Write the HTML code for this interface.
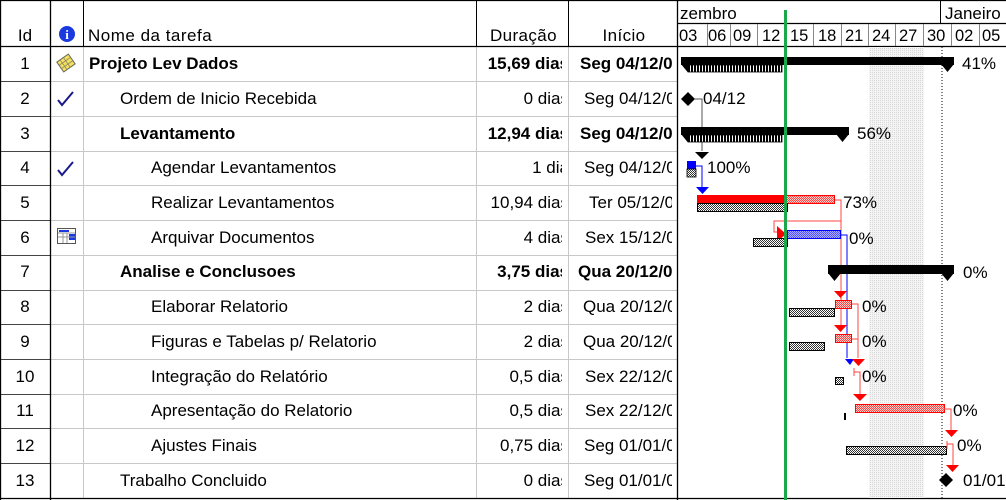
<!DOCTYPE html>
<html><head><meta charset="utf-8"><style>
html,body{margin:0;padding:0;background:#fff;}
svg{display:block;font-family:"Liberation Sans",Arial,sans-serif;}
</style></head><body>
<svg width="1006" height="500" viewBox="0 0 1006 500" xmlns="http://www.w3.org/2000/svg">
<defs>
<pattern id="gh" width="2" height="2" patternUnits="userSpaceOnUse"><rect width="2" height="2" fill="#fff"/><rect width="1" height="1" fill="#333"/><rect x="1" y="1" width="1" height="1" fill="#333"/></pattern>
<pattern id="rh" width="2" height="2" patternUnits="userSpaceOnUse"><rect width="2" height="2" fill="#fcc"/><rect width="1" height="1" fill="#f44"/><rect x="1" y="1" width="1" height="1" fill="#f44"/></pattern>
<pattern id="bh" width="2" height="2" patternUnits="userSpaceOnUse"><rect width="2" height="2" fill="#aaf"/><rect width="1" height="1" fill="#55f"/><rect x="1" y="1" width="1" height="1" fill="#55f"/></pattern>
<pattern id="wk" width="2" height="2" patternUnits="userSpaceOnUse"><rect width="2" height="2" fill="#f4f4f4"/><rect width="1" height="1" fill="#d8d8d8"/></pattern>
<pattern id="vs" width="3" height="2" patternUnits="userSpaceOnUse"><rect width="3" height="2" fill="#000"/><rect width="1" height="2" fill="#fff"/></pattern>
</defs>
<g stroke="#c8c8c8" stroke-width="1">
<line x1="50" y1="81.5" x2="677" y2="81.5"/><line x1="50" y1="116.5" x2="677" y2="116.5"/><line x1="50" y1="151.5" x2="677" y2="151.5"/><line x1="50" y1="185.5" x2="677" y2="185.5"/><line x1="50" y1="220.5" x2="677" y2="220.5"/><line x1="50" y1="255.5" x2="677" y2="255.5"/><line x1="50" y1="290.5" x2="677" y2="290.5"/><line x1="50" y1="324.5" x2="677" y2="324.5"/><line x1="50" y1="359.5" x2="677" y2="359.5"/><line x1="50" y1="394.5" x2="677" y2="394.5"/><line x1="50" y1="428.5" x2="677" y2="428.5"/><line x1="50" y1="463.5" x2="677" y2="463.5"/>
<line x1="83.5" y1="47" x2="83.5" y2="498"/><line x1="476.5" y1="47" x2="476.5" y2="498"/><line x1="568.5" y1="47" x2="568.5" y2="498"/>
</g>
<g stroke="#444" stroke-width="1">
<line x1="0" y1="81.5" x2="50" y2="81.5"/><line x1="0" y1="116.5" x2="50" y2="116.5"/><line x1="0" y1="151.5" x2="50" y2="151.5"/><line x1="0" y1="185.5" x2="50" y2="185.5"/><line x1="0" y1="220.5" x2="50" y2="220.5"/><line x1="0" y1="255.5" x2="50" y2="255.5"/><line x1="0" y1="290.5" x2="50" y2="290.5"/><line x1="0" y1="324.5" x2="50" y2="324.5"/><line x1="0" y1="359.5" x2="50" y2="359.5"/><line x1="0" y1="394.5" x2="50" y2="394.5"/><line x1="0" y1="428.5" x2="50" y2="428.5"/><line x1="0" y1="463.5" x2="50" y2="463.5"/>
</g>
<g stroke="#000" stroke-width="1.3">
<line x1="0" y1="46.5" x2="1006" y2="46.5"/>
<line x1="0" y1="498.5" x2="1006" y2="498.5"/>
<line x1="0.5" y1="0" x2="0.5" y2="500"/>
<line x1="50.5" y1="0" x2="50.5" y2="500"/>
<line x1="677.5" y1="0" x2="677.5" y2="500"/>
<line x1="0" y1="0.5" x2="1006" y2="0.5"/>
<line x1="677" y1="23.5" x2="1006" y2="23.5"/>
</g>
<g stroke="#000" stroke-width="1"><line x1="83.5" y1="0" x2="83.5" y2="47"/><line x1="476.5" y1="0" x2="476.5" y2="47"/><line x1="568.5" y1="0" x2="568.5" y2="47"/><line x1="940.5" y1="0" x2="940.5" y2="23"/></g>
<g stroke="#888" stroke-width="1">
<line x1="707.5" y1="24" x2="707.5" y2="46"/><line x1="730.5" y1="24" x2="730.5" y2="46"/><line x1="757.5" y1="24" x2="757.5" y2="46"/><line x1="785.5" y1="24" x2="785.5" y2="46"/><line x1="813.5" y1="24" x2="813.5" y2="46"/><line x1="841.5" y1="24" x2="841.5" y2="46"/><line x1="868.5" y1="24" x2="868.5" y2="46"/><line x1="895.5" y1="24" x2="895.5" y2="46"/><line x1="923.5" y1="24" x2="923.5" y2="46"/><line x1="951.5" y1="24" x2="951.5" y2="46"/><line x1="979.5" y1="24" x2="979.5" y2="46"/>
</g>
<g font-size="17" fill="#000">
<text x="25" y="41" text-anchor="middle">Id</text>
<circle cx="67" cy="34" r="8" fill="#1a3ae0"/><text x="67" y="39" text-anchor="middle" fill="#fff" font-size="13" font-weight="bold" font-family="Liberation Serif">i</text>
<text x="88" y="41" letter-spacing="0.5">Nome da tarefa</text>
<text x="557" y="41" text-anchor="end" letter-spacing="0.4">Duração</text>
<text x="624" y="41" text-anchor="middle" letter-spacing="0.4">Início</text>
<text x="680" y="19">zembro</text><text x="945" y="19">Janeiro</text>
<g font-size="16.5"><text x="679" y="41">03</text><text x="708" y="41">06</text><text x="733" y="41">09</text><text x="762" y="41">12</text><text x="790" y="41">15</text><text x="818" y="41">18</text><text x="845" y="41">21</text><text x="872" y="41">24</text><text x="899" y="41">27</text><text x="927" y="41">30</text><text x="955" y="41">02</text><text x="982" y="41">05</text></g>
</g>
<g font-size="17" fill="#000">
<g text-anchor="middle"><text x="25" y="69">1</text><text x="25" y="104">2</text><text x="25" y="139">3</text><text x="25" y="173">4</text><text x="25" y="208">5</text><text x="25" y="243">6</text><text x="25" y="277">7</text><text x="25" y="312">8</text><text x="25" y="347">9</text><text x="25" y="382">10</text><text x="25" y="416">11</text><text x="25" y="451">12</text><text x="25" y="486">13</text></g>
<text x="89" y="69" font-weight="bold">Projeto Lev Dados</text>
<text x="120" y="104">Ordem de Inicio Recebida</text>
<text x="120" y="139" font-weight="bold">Levantamento</text>
<text x="151" y="173">Agendar Levantamentos</text>
<text x="151" y="208">Realizar Levantamentos</text>
<text x="151" y="243">Arquivar Documentos</text>
<text x="120" y="277" font-weight="bold">Analise e Conclusoes</text>
<text x="151" y="312">Elaborar Relatorio</text>
<text x="151" y="347">Figuras e Tabelas p/ Relatorio</text>
<text x="151" y="382">Integração do Relatório</text>
<text x="151" y="416">Apresentação do Relatorio</text>
<text x="151" y="451">Ajustes Finais</text>
<text x="120" y="486">Trabalho Concluido</text>
</g>
<svg x="477" y="47" width="85" height="451" font-size="17">
<g transform="translate(-477,-47)" text-anchor="end">
<text x="569" y="69" font-weight="bold">15,69 dias</text><text x="569" y="104">0 dias</text><text x="569" y="139" font-weight="bold">12,94 dias</text><text x="569" y="173">1 dia</text><text x="569" y="208">10,94 dias</text><text x="569" y="243">4 dias</text><text x="569" y="277" font-weight="bold">3,75 dias</text><text x="569" y="312">2 dias</text><text x="569" y="347">2 dias</text><text x="569" y="382">0,5 dias</text><text x="569" y="416">0,5 dias</text><text x="569" y="451">0,75 dias</text><text x="569" y="486">0 dias</text>
</g></svg>
<svg x="569" y="47" width="103" height="451" font-size="17">
<g transform="translate(-569,-47)">
<text x="580" y="69" font-weight="bold">Seg 04/12/06</text><text x="584" y="104">Seg 04/12/06</text><text x="580" y="139" font-weight="bold">Seg 04/12/06</text><text x="584" y="173">Seg 04/12/06</text><text x="589" y="208">Ter 05/12/06</text><text x="585" y="243">Sex 15/12/06</text><text x="578" y="277" font-weight="bold">Qua 20/12/06</text><text x="583" y="312">Qua 20/12/06</text><text x="583" y="347">Qua 20/12/06</text><text x="585" y="382">Sex 22/12/06</text><text x="585" y="416">Sex 22/12/06</text><text x="584" y="451">Seg 01/01/07</text><text x="584" y="486">Seg 01/01/07</text>
</g></svg>
<g transform="translate(66,63) rotate(-35)"><rect x="-7" y="-6" width="14" height="12" fill="#f4e060" stroke="#665" stroke-width="1"/><path d="M-7,-2H7M-7,2H7M-3,-6V6M1,-6V6" stroke="#886" stroke-width="0.8"/></g>
<path d="M58,100 L62,105 L73,92" stroke="#1a1a8a" stroke-width="2" fill="none"/>
<path d="M58,170 L62,175 L73,162" stroke="#1a1a8a" stroke-width="2" fill="none"/>
<rect x="57.5" y="228.5" width="18" height="15" fill="#fff" stroke="#555"/><rect x="59" y="230" width="10" height="2" fill="#1a3ae0"/><rect x="69" y="234" width="6" height="6" fill="#1a3ae0"/><path d="M58,233H75M58,237H75M63,233V243M67,233V243" stroke="#999" stroke-width="1"/>
<rect x="869" y="47" width="55" height="451" fill="url(#wk)"/>
<line x1="942" y1="47" x2="942" y2="498" stroke="#000" stroke-dasharray="1,2"/>
<rect x="681" y="57" width="273" height="8" fill="#000"/>
<path d="M681,64h13l-6.5,8z M941,64h13l-6.5,8z" fill="#000"/>
<rect x="688" y="65" width="94" height="7" fill="url(#vs)" stroke="#000" stroke-width="0.8"/>
<text x="962" y="69" font-size="17">41%</text>
<path d="M688,92 l7,7 -7,7 -7,-7z" fill="#000"/>
<path d="M695,99 H702 V151" stroke="#555" fill="none"/>
<text x="703" y="104" font-size="17">04/12</text>
<rect x="681" y="127" width="168" height="8" fill="#000"/>
<path d="M681,134h13l-6.5,8z M836,134h13l-6.5,8z" fill="#000"/>
<rect x="688" y="135" width="94" height="7" fill="url(#vs)" stroke="#000" stroke-width="0.8"/>
<text x="857" y="139" font-size="17">56%</text>
<path d="M695,152h14l-7,7z" fill="#000"/>
<rect x="687" y="161" width="9" height="8" fill="#00f"/>
<rect x="687" y="169" width="9" height="8" fill="url(#gh)" stroke="#000" stroke-width="0.8"/>
<path d="M696,166 H702 V188" stroke="#00f" fill="none"/>
<path d="M696,187h13l-6.5,7z" fill="#00f"/>
<text x="707" y="173" font-size="17">100%</text>
<rect x="697" y="195" width="88" height="8" fill="#f00"/>
<rect x="785.5" y="195.5" width="49" height="8" fill="url(#rh)" stroke="#f00"/>
<rect x="697.5" y="203.5" width="90" height="8" fill="url(#gh)" stroke="#000"/>
<path d="M835,200 H841 V325" stroke="#f44" fill="none"/>
<text x="843" y="208" font-size="17">73%</text>
<path d="M841,221 H774 V232 H780" stroke="#f44" fill="none"/>
<path d="M777,226 L786,234 L777,242z" fill="#f00"/>
<rect x="787.5" y="230.5" width="53" height="8" fill="url(#bh)" stroke="#00f"/>
<rect x="753.5" y="238.5" width="34" height="8" fill="url(#gh)" stroke="#000"/>
<path d="M841,235 H847 V358" stroke="#00f" fill="none"/>
<text x="849" y="244" font-size="17">0%</text>
<rect x="828" y="265" width="126" height="9" fill="#000"/>
<path d="M828,273h13l-6.5,8z M941,273h13l-6.5,8z" fill="#000"/>
<text x="963" y="278" font-size="17">0%</text>
<path d="M834,291h13l-6.5,7z" fill="#f00"/>
<rect x="835.5" y="300.5" width="16" height="8" fill="url(#rh)" stroke="#f00"/>
<rect x="789.5" y="308.5" width="45" height="8" fill="url(#gh)" stroke="#000"/>
<path d="M852,304 H858 V358" stroke="#f44" fill="none"/>
<text x="862" y="312" font-size="17">0%</text>
<path d="M834,325h13l-6.5,7z" fill="#f00"/>
<rect x="835.5" y="334.5" width="16" height="8" fill="url(#rh)" stroke="#f00"/>
<rect x="789.5" y="342.5" width="35" height="8" fill="url(#gh)" stroke="#000"/>
<path d="M852,339 H858" stroke="#f44" fill="none"/>
<text x="862" y="347" font-size="17">0%</text>
<path d="M845,359h9l-4,6z" fill="#00f"/>
<path d="M852,359h13l-6.5,7z" fill="#f00"/>
<path d="M854,368 V376 M854,372 H860 V394" stroke="#f44" fill="none"/>
<path d="M853,394h14l-7,7z" fill="#f00"/>
<rect x="835.5" y="377.5" width="8" height="7" fill="url(#gh)" stroke="#000"/>
<text x="862" y="382" font-size="17">0%</text>
<rect x="855.5" y="404.5" width="89" height="8" fill="url(#rh)" stroke="#f00"/>
<rect x="844" y="413" width="2" height="7" fill="#000"/>
<path d="M944,409 H951 V430" stroke="#f44" fill="none"/>
<text x="953" y="416" font-size="17">0%</text>
<path d="M945,430h13l-6.5,7z" fill="#f00"/>
<rect x="846.5" y="446.5" width="100" height="8" fill="url(#gh)" stroke="#000"/>
<path d="M947,441 V449 M947,444 H953 V466" stroke="#f44" fill="none"/>
<text x="957" y="451" font-size="17">0%</text>
<path d="M946,465h13l-6.5,7z" fill="#f00"/>
<path d="M946,473 l7,7 -7,7 -7,-7z" fill="#000"/>
<text x="963" y="486" font-size="17">01/01</text>
<rect x="784" y="10" width="3" height="490" fill="#1aa84a"/>
</svg>
</body></html>
